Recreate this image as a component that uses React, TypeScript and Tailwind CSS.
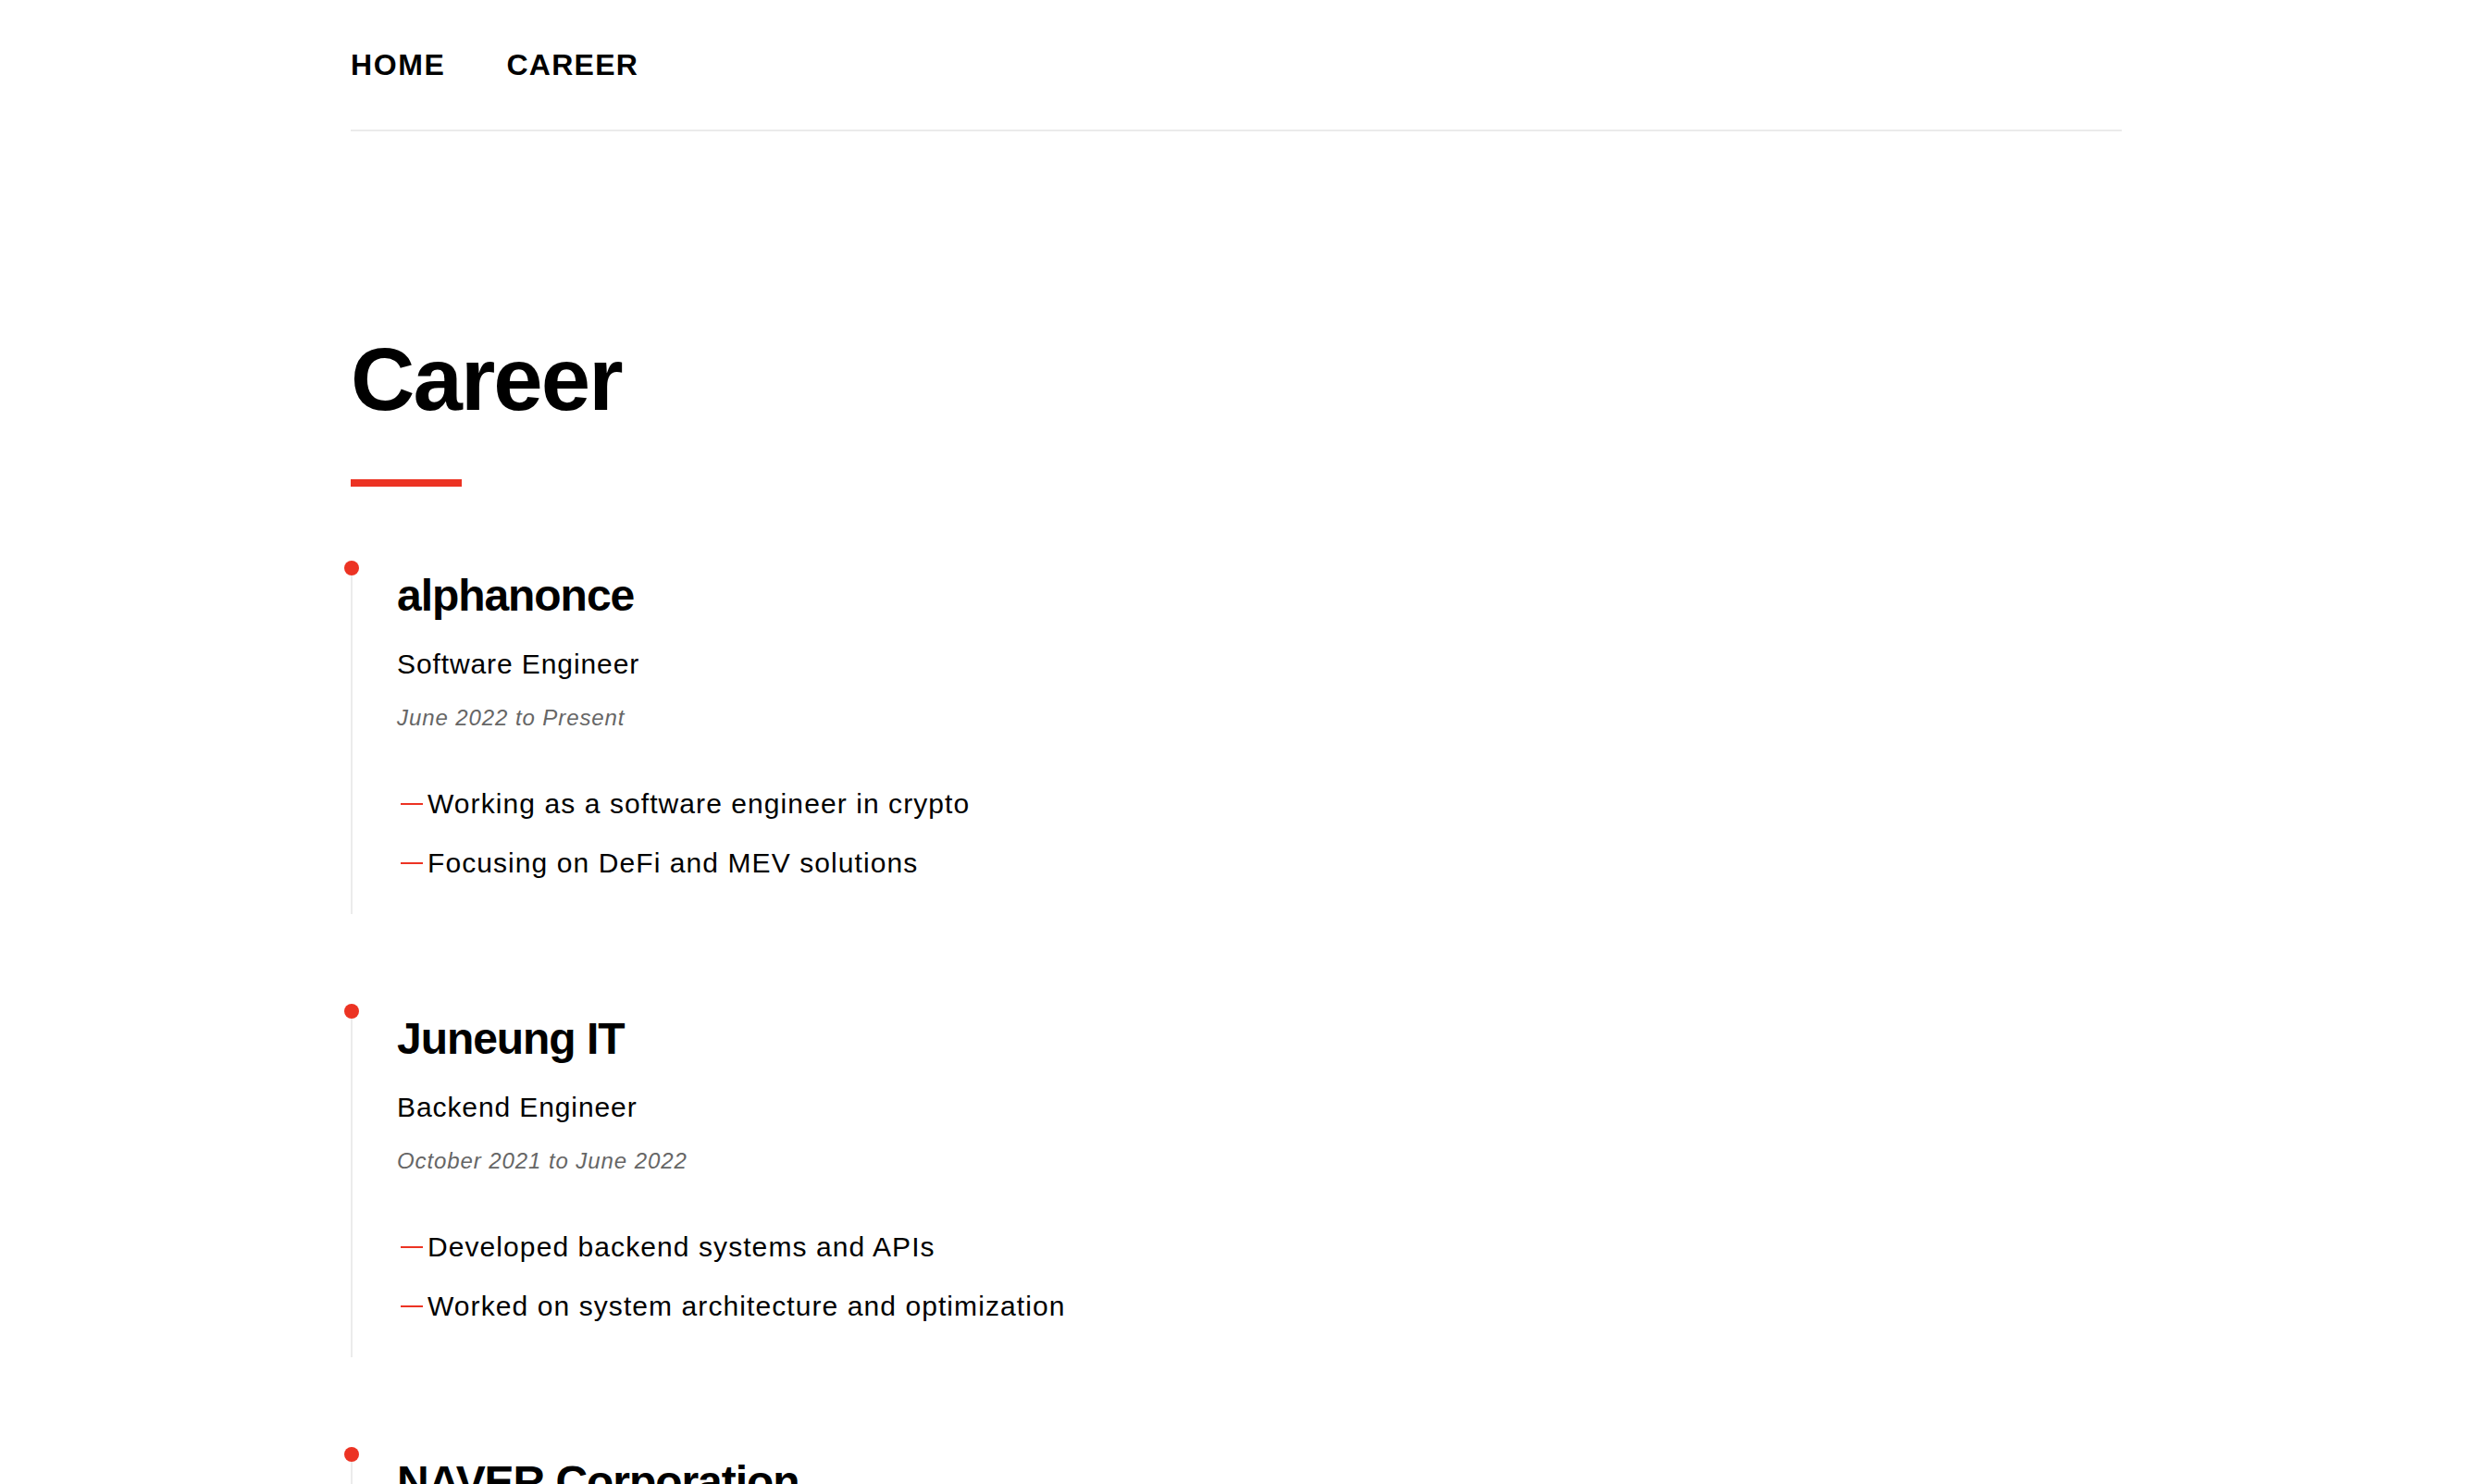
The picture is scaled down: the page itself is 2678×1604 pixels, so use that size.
import React from "react";

type Job = {
  company: string;
  role: string;
  period: string;
  points: string[];
};

const jobs: Job[] = [
  {
    company: "alphanonce",
    role: "Software Engineer",
    period: "June 2022 to Present",
    points: [
      "Working as a software engineer in crypto",
      "Focusing on DeFi and MEV solutions",
    ],
  },
  {
    company: "Juneung IT",
    role: "Backend Engineer",
    period: "October 2021 to June 2022",
    points: [
      "Developed backend systems and APIs",
      "Worked on system architecture and optimization",
    ],
  },
  {
    company: "NAVER Corporation",
    role: "Software Engineer",
    period: "2019 to 2021",
    points: ["Worked on large-scale web services"],
  },
];

function TimelineItem({ job }: { job: Job }) {
  return (
    <li className="relative mb-[97px] border-l-2 border-[#ebebeb] pb-[40px] pl-[48px] pt-[14px]">
      <span className="absolute left-[-9px] top-0 h-4 w-4 rounded-full bg-[#ec3323]" />
      <h2 className="text-[48px] font-bold leading-none tracking-[-0.022em] text-black">
        {job.company}
      </h2>
      <p className="mt-[35px] text-[30px] leading-none tracking-[0.03em] text-black">
        {job.role}
      </p>
      <p className="mt-[31px] text-[24px] italic leading-none tracking-[0.038em] text-[#666666]">
        {job.period}
      </p>
      <ul className="mt-[66px] flex flex-col gap-[34px]">
        {job.points.map((p) => (
          <li
            key={p}
            className="flex items-center text-[30px] leading-none tracking-[0.036em] text-black"
          >
            <span className="ml-[4px] mr-[5px] inline-block h-[2px] w-[24px] shrink-0 bg-[#ec3323]" />
            <span>{p}</span>
          </li>
        ))}
      </ul>
    </li>
  );
}

export default function App() {
  return (
    <div
      className="min-h-screen bg-white"
      style={{ fontFamily: '"Liberation Sans", Arial, Helvetica, sans-serif' }}
    >
      <div className="ml-[379px] w-[1914px]">
        <nav className="flex gap-[66px] border-b-2 border-[#ebebeb] pb-[54px] pt-[54px]">
          <a className="text-[32px] font-bold uppercase leading-none tracking-[0.05em] text-black">
            Home
          </a>
          <a className="text-[32px] font-bold uppercase leading-none tracking-[0.04em] text-black">
            Career
          </a>
        </nav>
        <main>
          <h1 className="mt-[220px] text-[96px] font-bold leading-none tracking-[-0.02em] text-black">
            Career
          </h1>
          <div className="mt-[60px] h-[8px] w-[120px] bg-[#ec3323]" />
          <ol className="mt-[80px]">
            {jobs.map((j) => (
              <TimelineItem key={j.company} job={j} />
            ))}
          </ol>
        </main>
      </div>
    </div>
  );
}
